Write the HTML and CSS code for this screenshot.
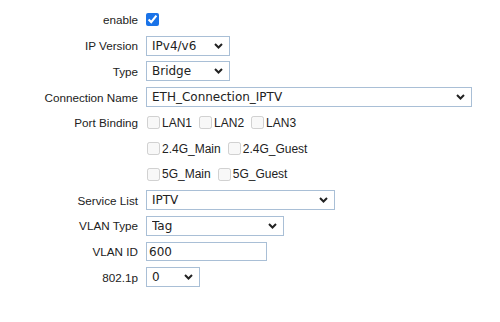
FILE: index.html
```html
<!DOCTYPE html>
<html lang="en">
<head>
    <meta charset="UTF-8">
    <title>WAN Connection</title>
    <link rel="stylesheet" href="styles.css">
</head>
<body>
    <form class="wan-form">
        <label class="field-label" for="enable">enable</label>
        <div class="field"><input type="checkbox" id="enable" class="check-main" checked></div>

        <label class="field-label" for="ipVersion">IP Version</label>
        <div class="field">
            <select id="ipVersion" class="sel sel-short"><option>IPv4/v6</option></select>
        </div>

        <label class="field-label" for="type">Type</label>
        <div class="field">
            <select id="type" class="sel sel-short"><option>Bridge</option></select>
        </div>

        <label class="field-label" for="connName">Connection Name</label>
        <div class="field">
            <select id="connName" class="sel sel-wide"><option>ETH_Connection_IPTV</option></select>
        </div>

        <span class="field-label">Port Binding</span>
        <div class="field ports">
            <label class="port"><input type="checkbox" disabled>LAN1</label>
            <label class="port"><input type="checkbox" disabled>LAN2</label>
            <label class="port"><input type="checkbox" disabled>LAN3</label>
        </div>

        <span class="field-label"></span>
        <div class="field ports">
            <label class="port"><input type="checkbox" disabled>2.4G_Main</label>
            <label class="port"><input type="checkbox" disabled>2.4G_Guest</label>
        </div>

        <span class="field-label"></span>
        <div class="field ports">
            <label class="port"><input type="checkbox" disabled>5G_Main</label>
            <label class="port"><input type="checkbox" disabled>5G_Guest</label>
        </div>

        <label class="field-label" for="serviceList">Service List</label>
        <div class="field">
            <select id="serviceList" class="sel sel-service"><option>IPTV</option></select>
        </div>

        <label class="field-label" for="vlanType">VLAN Type</label>
        <div class="field">
            <select id="vlanType" class="sel sel-vlan"><option>Tag</option></select>
        </div>

        <label class="field-label" for="vlanId">VLAN ID</label>
        <div class="field">
            <input type="text" id="vlanId" class="txt" value="600">
        </div>

        <label class="field-label" for="prio">802.1p</label>
        <div class="field">
            <select id="prio" class="sel sel-tiny"><option>0</option></select>
        </div>
    </form>
</body>
</html>
```

FILE: styles.css
```css
body {
    margin: 0;
    background-color: #fff;
    color: #222;
    font-family: "Liberation Sans", Arial, sans-serif;
    font-size: 12px;
}
.wan-form {
    display: grid;
    grid-template-columns: 138px auto;
    grid-auto-rows: 25.75px;
    column-gap: 8px;
    padding-top: 7px;
}
.field-label {
    display: flex;
    align-items: center;
    justify-content: flex-end;
    font-size: 11.7px;
}
.field {
    display: flex;
    align-items: center;
}
.check-main {
    width: 13px;
    height: 13px;
    margin: 0;
    accent-color: #1a73e8;
}
.sel {
    appearance: none;
    height: 20px;
    padding: 0 20px 0 5px;
    border: 1px solid #a9bfd6;
    border-radius: 0;
    background: #fff url("data:image/svg+xml;utf8,<svg xmlns='http://www.w3.org/2000/svg' width='9' height='6' viewBox='0 0 9 6'><path d='M1 1l3.5 3.5L8 1' fill='none' stroke='%23222' stroke-width='2'/></svg>") no-repeat right 6px center;
    color: #222;
    font-family: "DejaVu Sans", Verdana, sans-serif;
    font-size: 12px;
}
.sel-short { width: 84px; }
.sel-wide { width: 326px; }
.sel-service { width: 189px; }
.sel-vlan { width: 138px; }
.sel-tiny { width: 54px; }
.txt {
    width: 121px;
    height: 19px;
    box-sizing: border-box;
    padding: 0 2px;
    border: 1px solid #a9bfd6;
    color: #222;
    font-family: "DejaVu Sans", Verdana, sans-serif;
    font-size: 12px;
}
.ports {
    gap: 6px;
}
.port {
    display: flex;
    align-items: center;
    gap: 2px;
}
.port input {
    width: 13px;
    height: 13px;
    margin: 0 0 0 1px;
}
```
